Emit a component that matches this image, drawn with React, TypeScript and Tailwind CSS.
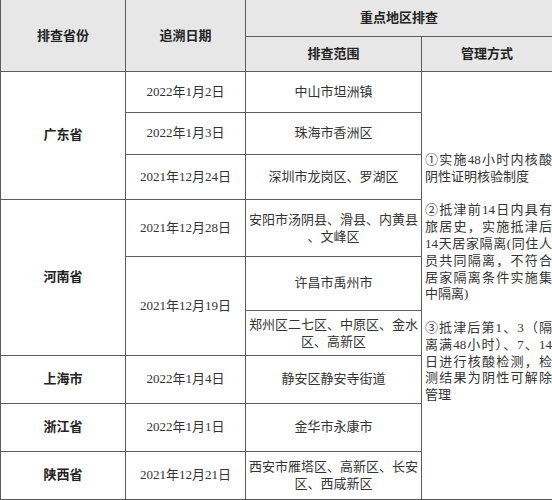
const cell = "border border-[#5c5c5c] text-center align-middle p-0";

const mgmt: { t: string; full?: boolean }[] = [
  { t: "①实施48小时内核酸", full: true },
  { t: "阴性证明核验制度" },
  { t: "" },
  { t: "②抵津前14日内具有", full: true },
  { t: "旅居史，实施抵津后", full: true },
  { t: "14天居家隔离(同住人", full: true },
  { t: "员共同隔离，不符合", full: true },
  { t: "居家隔离条件实施集", full: true },
  { t: "中隔离)" },
  { t: "" },
  { t: "③抵津后第1、3（隔", full: true },
  { t: "离满48小时）、7、14", full: true },
  { t: "日进行核酸检测，检", full: true },
  { t: "测结果为阴性可解除", full: true },
  { t: "管理" },
];

function Two({ a, b }: { a: string; b: string }) {
  return (
    <div className="leading-[17px]">
      <div>{a}</div>
      <div>{b}</div>
    </div>
  );
}

export default function App() {
  return (
    <div className="w-[552px] h-[500px] overflow-hidden bg-white font-['Liberation_Serif','Noto_Sans_CJK_SC',serif] text-[13px] text-[#333]">
      <table className="w-[552px] table-fixed border-collapse">
        <colgroup>
          <col className="w-[125px]" />
          <col className="w-[120px]" />
          <col className="w-[176px]" />
          <col className="w-[131px]" />
        </colgroup>
        <thead className="bg-[#e7e7e7] font-bold text-[#222]">
          <tr className="h-[36px]">
            <th rowSpan={2} className={`${cell} border-t-0`}>排查省份</th>
            <th rowSpan={2} className={`${cell} border-t-0`}>追溯日期</th>
            <th colSpan={2} className={`${cell} border-t-0`}>重点地区排查</th>
          </tr>
          <tr className="h-[35px]">
            <th className={cell}>排查范围</th>
            <th className={cell}>管理方式</th>
          </tr>
        </thead>
        <tbody>
          <tr className="h-[41px]">
            <td rowSpan={3} className={`${cell} font-bold text-[#222]`}>广东省</td>
            <td className={cell}>2022年1月2日</td>
            <td className={cell}>中山市坦洲镇</td>
            <td rowSpan={9} className={`${cell} pl-[3px] pr-0 pb-[14px] text-left`}>
              <div className="leading-[16.8px]">
                {mgmt.map((l, i) => (
                  <div
                    key={i}
                    className={
                      l.full
                        ? "h-[16.8px] whitespace-nowrap text-justify [text-align-last:justify]"
                        : "h-[16.8px] whitespace-nowrap"
                    }
                  >
                    {l.t}
                  </div>
                ))}
              </div>
            </td>
          </tr>
          <tr className="h-[42px]">
            <td className={cell}>2022年1月3日</td>
            <td className={cell}>珠海市香洲区</td>
          </tr>
          <tr className="h-[45px]">
            <td className={cell}>2021年12月24日</td>
            <td className={cell}>深圳市龙岗区、罗湖区</td>
          </tr>
          <tr className="h-[57px]">
            <td rowSpan={3} className={`${cell} font-bold text-[#222]`}>河南省</td>
            <td className={cell}>2021年12月28日</td>
            <td className={cell}>
              <Two a="安阳市汤阴县、滑县、内黄县" b="、文峰区" />
            </td>
          </tr>
          <tr className="h-[54px]">
            <td rowSpan={2} className={cell}>2021年12月19日</td>
            <td className={cell}>许昌市禹州市</td>
          </tr>
          <tr className="h-[45px]">
            <td className={cell}>
              <Two a="郑州区二七区、中原区、金水" b="区、高新区" />
            </td>
          </tr>
          <tr className="h-[48px]">
            <td className={`${cell} font-bold text-[#222]`}>上海市</td>
            <td className={cell}>2022年1月4日</td>
            <td className={cell}>静安区静安寺街道</td>
          </tr>
          <tr className="h-[48px]">
            <td className={`${cell} font-bold text-[#222]`}>浙江省</td>
            <td className={cell}>2022年1月1日</td>
            <td className={cell}>金华市永康市</td>
          </tr>
          <tr className="h-[48px]">
            <td className={`${cell} font-bold text-[#222]`}>陕西省</td>
            <td className={cell}>2021年12月21日</td>
            <td className={cell}>
              <Two a="西安市雁塔区、高新区、长安" b="区、西咸新区" />
            </td>
          </tr>
        </tbody>
      </table>
    </div>
  );
}
